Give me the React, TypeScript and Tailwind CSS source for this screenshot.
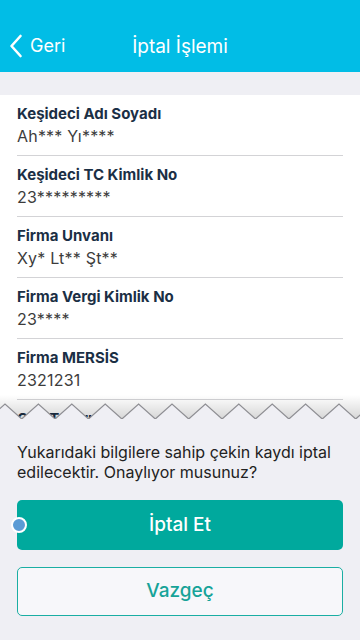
import React from "react";

const rows = [
  { label: "Keşideci Adı Soyadı", value: "Ah*** Yı****" },
  { label: "Keşideci TC Kimlik No", value: "23*********" },
  { label: "Firma Unvanı", value: "Xy* Lt** Şt**" },
  { label: "Firma Vergi Kimlik No", value: "23****" },
  { label: "Firma MERSİS", value: "2321231" },
  { label: "Çek Tutarı", value: "" },
];

function Zigzag() {
  const period = 33.4;
  const peakY = 9;
  const valleyY = 24;
  const pts: string[] = [];
  const x = 5 - period / 2;
  pts.push(`${x},${valleyY}`);
  for (let i = 0; i < 13; i++) {
    const px = 5 + i * period;
    const vx = px + period / 2;
    pts.push(`${px},${peakY}`);
    pts.push(`${vx},${valleyY}`);
  }
  const line = pts.join(" ");
  const fillPoly = `${line} 400,40 -40,40`;
  const shadowPoly = `${line} 400,0 -40,0`;
  return (
    <svg width="360" height="24" viewBox="0 0 360 24" className="block">
      <defs>
        <linearGradient id="sh" x1="0" y1="0" x2="0" y2="1">
          <stop offset="0" stopColor="#000" stopOpacity="0" />
          <stop offset="1" stopColor="#000" stopOpacity="0.16" />
        </linearGradient>
      </defs>
      <polygon points={shadowPoly} fill="url(#sh)" />
      <polygon points={fillPoly} fill="#EFEFF4" />
      <polyline points={line} fill="none" stroke="#8e8e93" strokeWidth="1.2" />
    </svg>
  );
}

export default function App() {
  return (
    <div
      className="relative w-[360px] h-[640px] overflow-hidden bg-white"
      style={{ fontFamily: "Inter, 'Noto Sans', sans-serif" }}
    >
      <div className="h-[72px] bg-[#01BDE6] relative flex items-end pb-[14px]">
        <div className="flex items-center pl-[9px] gap-[7px] text-white">
          <svg width="14" height="24" viewBox="0 0 14 24">
            <path d="M11.5 2 L2.5 12 L11.5 22" fill="none" stroke="#fff" strokeWidth="2.6" strokeLinecap="round" strokeLinejoin="round" />
          </svg>
          <span className="text-[18px] leading-[22px]">Geri</span>
        </div>
        <div className="absolute left-0 right-0 bottom-[14px] text-center text-white text-[19px] leading-[22px]">
          İptal İşlemi
        </div>
      </div>
      <div className="h-[23px] bg-[#EFEFF4]" />
      <div className="flex flex-col">
        {rows.map((r) => (
          <div key={r.label} className="mx-[17px] pt-[9px] pb-[7px] border-b border-[#d3d3d6]">
            <div className="text-[15px] leading-[20px] font-bold text-[#1b2f45]">{r.label}</div>
            <div className="text-[16px] leading-[24px] h-[24px] text-[#3c3c3c] tracking-[0.2px]">{r.value}</div>
          </div>
        ))}
      </div>

      <div className="absolute left-0 right-0 bottom-0 flex flex-col">
        <Zigzag />
        <div className="bg-[#EFEFF4] px-[17px] pt-[23px] pb-[24px] flex flex-col">
          <p className="text-[16px] leading-[20px] text-[#222]">
            Yukarıdaki bilgilere sahip çekin kaydı iptal edilecektir. Onaylıyor musunuz?
          </p>
          <div className="relative mt-[18px]">
            <button className="w-full h-[50px] rounded-[5px] bg-[#00A99D] text-white text-[19px] font-medium">
              İptal Et
            </button>
            <span className="absolute left-[-6px] top-[17px] w-[16px] h-[16px] rounded-full bg-[#5b9bd5] border-2 border-white" />
          </div>
          <button className="mt-[17px] w-full h-[49px] rounded-[5px] border-[1.5px] border-[#1aaea3] bg-[#f7f7fa] text-[#16a398] text-[19px] font-medium">
            Vazgeç
          </button>
        </div>
      </div>
    </div>
  );
}
